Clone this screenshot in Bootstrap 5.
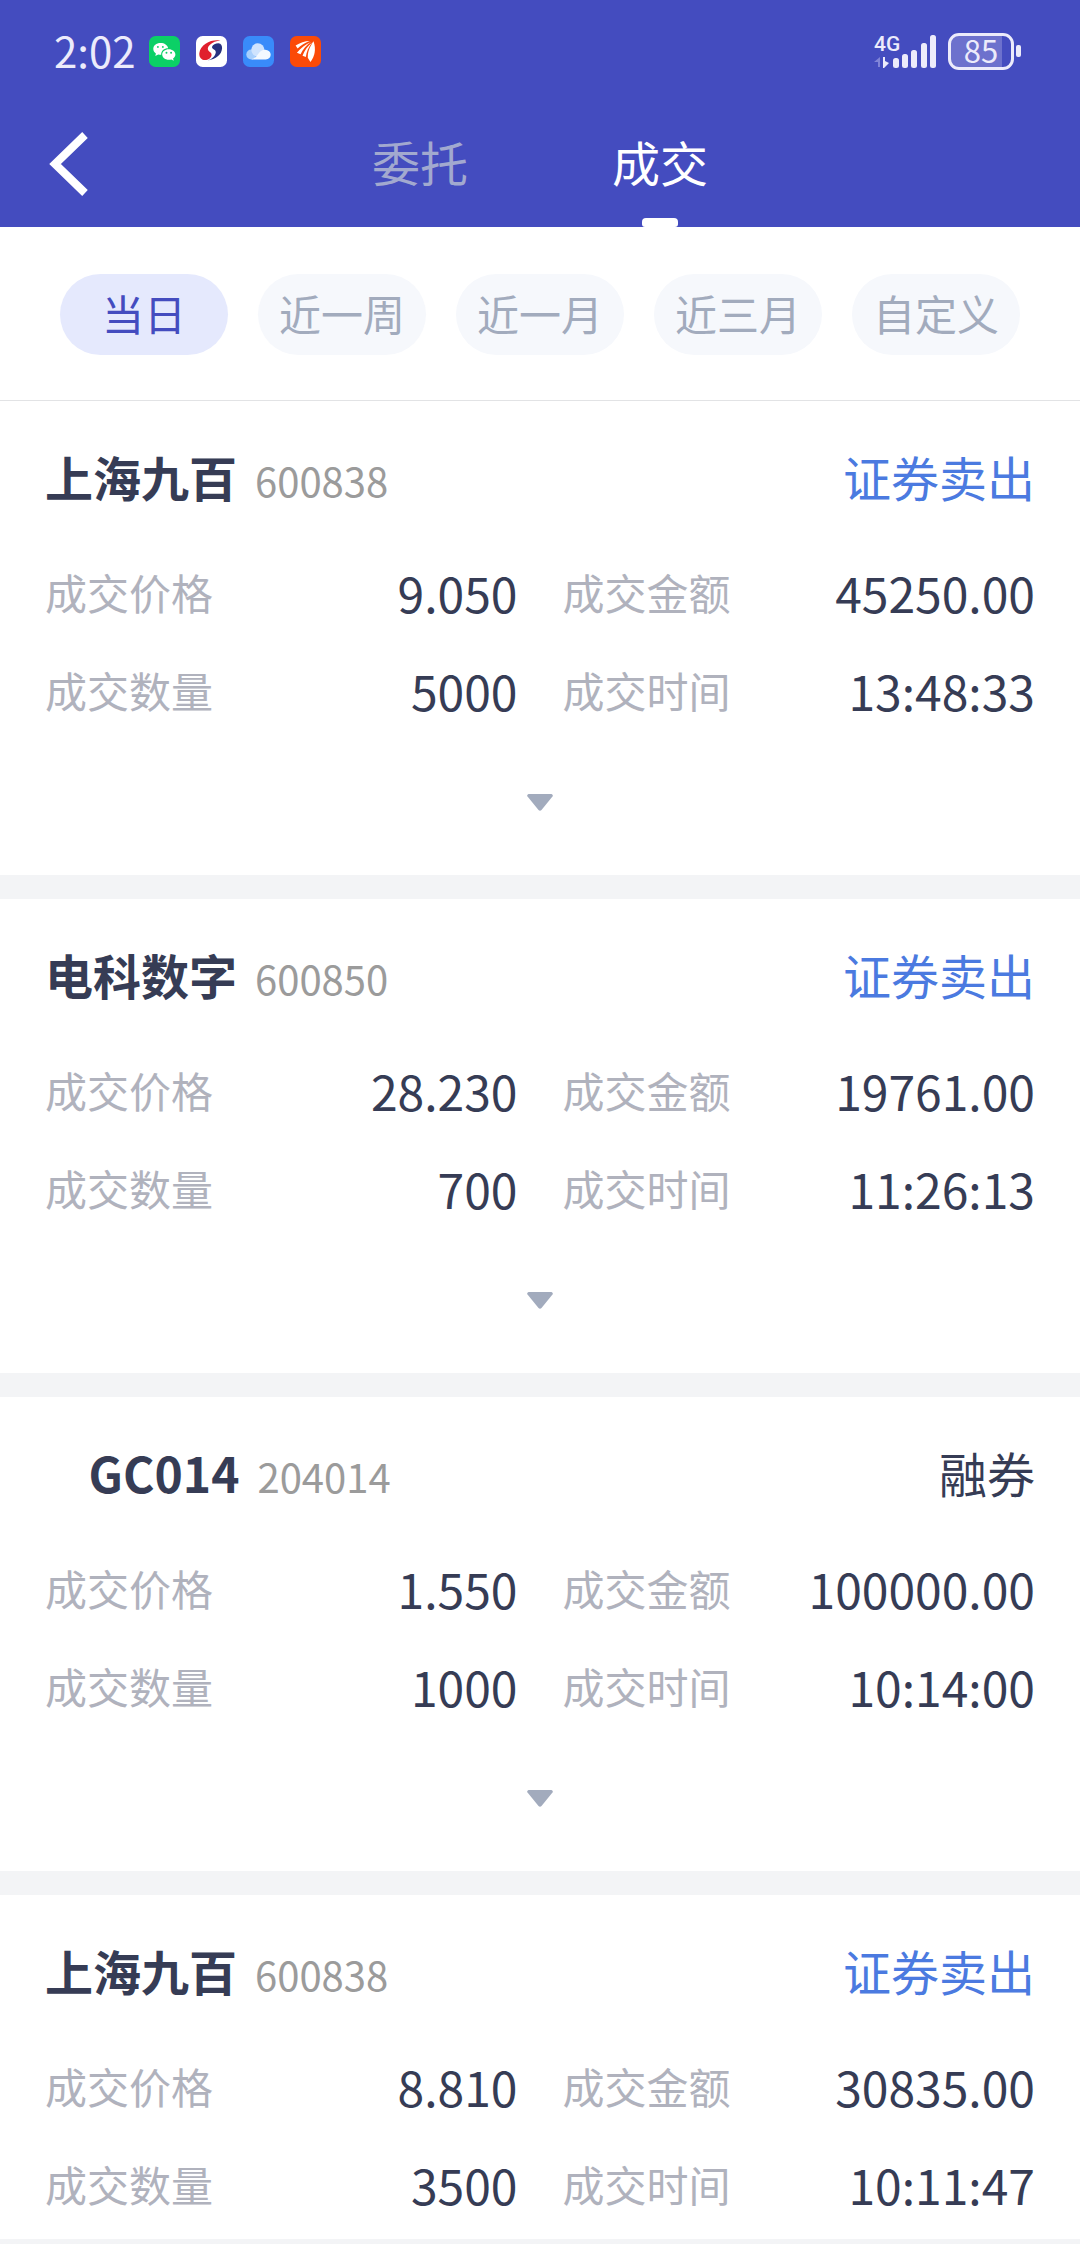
<!DOCTYPE html>
<html lang="zh-CN">
<head>
<meta charset="utf-8">
<meta name="viewport" content="width=device-width, initial-scale=1">
<title>成交</title>
<link href="https://cdn.jsdelivr.net/npm/bootstrap@5.3.0/dist/css/bootstrap.min.css" rel="stylesheet">
<style>
  :root { --brand: #444cbf; --ink: #363c55; --pale: #ecebfb; }
  body { font-family: "Noto Sans CJK SC", "Noto Sans", sans-serif; color: var(--ink); background: #fff; font-size: 48px; line-height: 60px; }
  .app-head { background: var(--brand); }

  .status-bar { height: 102px; padding: 0 59px 0 54px; color: var(--pale); }
  .clock { font-size: 42px; padding-bottom: 3px; }
  .app-icons { gap: 16px; margin-left: 13px; }
  .signal { width: 62px; height: 43px; margin-right: 12px; }
  .net-kind { font: 500 21px/22px Roboto, sans-serif; }
  .battery { width: 66px; height: 37px; padding-bottom: 3px; border: 3px solid var(--pale); border-radius: 11px; font-size: 31px; line-height: 31px; background: linear-gradient(90deg, #6d71cd 85%, transparent 85%); }
  .battery-nub { width: 5px; height: 12px; margin-left: 2px; border-radius: 2px; background: var(--pale); }

  .top-nav { height: 125px; }
  .back-btn { left: 32px; top: 20px; }
  .tab-link { width: 240px; padding-top: 29px; color: #a2a9cf; }
  .tab-link.active { color: #fff; }
  .tab-link.active::after { content: ""; width: 36px; height: 9px; margin-top: auto; border-radius: 4px 4px 3px 3px; background: #fff; }

  .range-bar { padding: 47px 60px 45px; gap: 30px; border-bottom: 1px solid #e2e3e5; }
  .range-btn { flex: 1 1 0; height: 81px; padding: 0 0 4px; border: 0; border-radius: 41px; font-size: 42px; line-height: 60px; color: #a2abbd; background: #f6f8fc; white-space: nowrap; }
  .range-btn.active { color: var(--brand); background: #e5e9fd; }

  .deal-list { min-height: 0; overflow-y: auto; scrollbar-width: none; }
  .deal-list::-webkit-scrollbar { display: none; }
  .deal { padding: 45px 45px 0; border-bottom: 24px solid #f3f4f6; }
  .deal-head { margin-bottom: 56px; }
  .deal-name { font-size: 48px; line-height: 60px; font-weight: 700; white-space: pre; }
  .deal-code { font-size: 40px; line-height: 48px; margin-left: 18px; color: #9b9b9b; }
  .side-sell { color: #4b7ae0; }
  .deal-data { --bs-gutter-x: 45px; --bs-gutter-y: 38px; }
  .deal-data dt { font-size: 42px; font-weight: 400; color: #b0b2bd; }
  .more-btn { height: 155px; padding: 10px 0 0; color: #a2abbd; }
  .home-strip { height: 5px; background: #f3f4f6; }
</style>
</head>
<body class="vh-100 d-flex flex-column overflow-hidden">

<header class="app-head flex-shrink-0">
  <div class="status-bar d-flex align-items-center">
    <span class="clock">2:02</span>
    <div class="app-icons d-flex">
      <svg width="31" height="31" viewBox="0 0 94 94" aria-hidden="true">
        <rect width="94" height="94" rx="20" fill="#0bd066"/>
        <path fill="#fff" d="M35 21C22 21 13 29 13 39c0 6 3 11 8 14l-2 8 9-5c3 1 6 1 9 1-1-12 9-20 21-20C56 27 47 21 35 21z"/>
        <path fill="#fff" d="M60 40c-11 0-20 7-20 16s9 16 20 16c3 0 5 0 8-1l7 4-2-7c4-3 7-7 7-12 0-9-9-16-20-16z"/>
        <g fill="#0bd066"><circle cx="27" cy="33" r="3"/><circle cx="42" cy="33" r="3"/><circle cx="53" cy="51" r="3"/><circle cx="67" cy="51" r="3"/></g>
      </svg>
      <svg width="31" height="31" viewBox="0 0 94 94" aria-hidden="true">
        <rect width="94" height="94" rx="20" fill="#fff"/>
        <path fill="#e01f2d" d="M74 14C48 9 14 24 10 52c-1 16 10 23 24 20 12-3 17-16 10-22-8-5-12-13-3-22C50 19 62 15 74 14z"/>
        <path fill="#27317f" d="M68 22c17 2 13 28-1 39-9 8-20 12-31 13 14-5 23-14 24-25 0-9-14-9-11-17 2-6 10-10 19-10z"/>
      </svg>
      <svg width="31" height="31" viewBox="0 0 94 94" aria-hidden="true">
        <rect width="94" height="94" rx="20" fill="#398bfa"/>
        <circle cx="25" cy="56" r="15" fill="#a8cffd"/>
        <circle cx="45" cy="42" r="20" fill="#cfe3fe"/>
        <path fill="#f3f8ff" d="M25 71c8-2 14-7 20-15 5-8 12-15 22-14 10 1 17 7 17 15s-6 14-15 14z"/>
      </svg>
      <svg width="31" height="31" viewBox="0 0 94 94" aria-hidden="true">
        <rect width="94" height="94" rx="20" fill="#fb4a08"/>
        <g fill="#fff"><path d="M60 15C45 15 30 20 17 29l6 9c10-10 22-17 37-23z"/><path d="M64 18C47 25 32 36 21 51l11 4c7-15 17-27 32-37z"/><path d="M67 20C53 32 44 44 38 60l10 4c2-16 8-30 19-44z"/><path d="M71 16C59 35 53 50 54 66l8 13c13-17 18-40 9-63z"/></g>
      </svg>
    </div>

    <svg class="signal ms-auto" viewBox="0 -3 62 43" role="img" aria-label="4G">
      <text class="net-kind" x="0" y="18" fill="#ecebfb">4G</text>
      <path d="M0 29l6-5v10H4v-5z" fill="#8084d8"/>
      <path d="M9 24l2 0v4l4 2-5 5H9z" fill="#ecebfb"/>
      <g fill="#ecebfb"><rect x="19" y="25" width="6" height="10" rx="2.500"/><rect x="28" y="21" width="6" height="14" rx="2.500"/><rect x="37" y="17" width="6" height="18" rx="2.500"/><rect x="47" y="10" width="6" height="25" rx="2.500"/><rect x="56" y="2" width="6" height="33" rx="2.500"/></g>
    </svg>
    <div class="battery d-flex align-items-center justify-content-center">85</div>
    <div class="battery-nub"></div>
  </div>

  <nav class="top-nav position-relative d-flex justify-content-center">
    <button type="button" class="back-btn btn border-0 position-absolute p-0" aria-label="返回">
      <svg class="d-block" width="76" height="84" viewBox="0 0 76 84"><path d="M53 13L23 42l30 29" fill="none" stroke="#fff" stroke-width="8"/></svg>
    </button>
    <a href="#" class="tab-link d-flex flex-column align-items-center text-decoration-none">委托</a>
    <a href="#" class="tab-link active d-flex flex-column align-items-center text-decoration-none" aria-current="page">成交</a>
  </nav>
</header>

<div class="range-bar d-flex flex-shrink-0">
  <button type="button" class="range-btn btn active">当日</button>
  <button type="button" class="range-btn btn">近一周</button>
  <button type="button" class="range-btn btn">近一月</button>
  <button type="button" class="range-btn btn">近三月</button>
  <button type="button" class="range-btn btn">自定义</button>
</div>

<main class="deal-list flex-grow-1">
  <article class="deal">
    <div class="deal-head d-flex align-items-baseline">
      <h2 class="deal-name mb-0">上海九百</h2><span class="deal-code">600838</span>
      <span class="side-sell ms-auto">证券卖出</span>
    </div>
    <dl class="deal-data row mb-0">
      <div class="col-6 d-flex justify-content-between align-items-center"><dt>成交价格</dt><dd class="mb-0">9.050</dd></div>
      <div class="col-6 d-flex justify-content-between align-items-center"><dt>成交金额</dt><dd class="mb-0">45250.00</dd></div>
      <div class="col-6 d-flex justify-content-between align-items-center"><dt>成交数量</dt><dd class="mb-0">5000</dd></div>
      <div class="col-6 d-flex justify-content-between align-items-center"><dt>成交时间</dt><dd class="mb-0">13:48:33</dd></div>
    </dl>
    <button type="button" class="more-btn btn border-0 w-100" aria-label="展开"><svg class="d-block mx-auto" width="26" height="17" viewBox="0 0 26 17"><path d="M1.500 0h23q2 1 1 2.500L14.500 16q-1.500 1.500-3 0L.5 2.500Q-.5 1 1.500 0z" fill="currentColor"/></svg></button>
  </article>

  <article class="deal">
    <div class="deal-head d-flex align-items-baseline">
      <h2 class="deal-name mb-0">电科数字</h2><span class="deal-code">600850</span>
      <span class="side-sell ms-auto">证券卖出</span>
    </div>
    <dl class="deal-data row mb-0">
      <div class="col-6 d-flex justify-content-between align-items-center"><dt>成交价格</dt><dd class="mb-0">28.230</dd></div>
      <div class="col-6 d-flex justify-content-between align-items-center"><dt>成交金额</dt><dd class="mb-0">19761.00</dd></div>
      <div class="col-6 d-flex justify-content-between align-items-center"><dt>成交数量</dt><dd class="mb-0">700</dd></div>
      <div class="col-6 d-flex justify-content-between align-items-center"><dt>成交时间</dt><dd class="mb-0">11:26:13</dd></div>
    </dl>
    <button type="button" class="more-btn btn border-0 w-100" aria-label="展开"><svg class="d-block mx-auto" width="26" height="17" viewBox="0 0 26 17"><path d="M1.500 0h23q2 1 1 2.500L14.500 16q-1.500 1.500-3 0L.5 2.500Q-.5 1 1.500 0z" fill="currentColor"/></svg></button>
  </article>

  <article class="deal">
    <div class="deal-head d-flex align-items-baseline">
      <h2 class="deal-name mb-0">    GC014</h2><span class="deal-code">204014</span>
      <span class="ms-auto">融券</span>
    </div>
    <dl class="deal-data row mb-0">
      <div class="col-6 d-flex justify-content-between align-items-center"><dt>成交价格</dt><dd class="mb-0">1.550</dd></div>
      <div class="col-6 d-flex justify-content-between align-items-center"><dt>成交金额</dt><dd class="mb-0">100000.00</dd></div>
      <div class="col-6 d-flex justify-content-between align-items-center"><dt>成交数量</dt><dd class="mb-0">1000</dd></div>
      <div class="col-6 d-flex justify-content-between align-items-center"><dt>成交时间</dt><dd class="mb-0">10:14:00</dd></div>
    </dl>
    <button type="button" class="more-btn btn border-0 w-100" aria-label="展开"><svg class="d-block mx-auto" width="26" height="17" viewBox="0 0 26 17"><path d="M1.500 0h23q2 1 1 2.500L14.500 16q-1.500 1.500-3 0L.5 2.500Q-.5 1 1.500 0z" fill="currentColor"/></svg></button>
  </article>

  <article class="deal">
    <div class="deal-head d-flex align-items-baseline">
      <h2 class="deal-name mb-0">上海九百</h2><span class="deal-code">600838</span>
      <span class="side-sell ms-auto">证券卖出</span>
    </div>
    <dl class="deal-data row mb-0">
      <div class="col-6 d-flex justify-content-between align-items-center"><dt>成交价格</dt><dd class="mb-0">8.810</dd></div>
      <div class="col-6 d-flex justify-content-between align-items-center"><dt>成交金额</dt><dd class="mb-0">30835.00</dd></div>
      <div class="col-6 d-flex justify-content-between align-items-center"><dt>成交数量</dt><dd class="mb-0">3500</dd></div>
      <div class="col-6 d-flex justify-content-between align-items-center"><dt>成交时间</dt><dd class="mb-0">10:11:47</dd></div>
    </dl>
    <button type="button" class="more-btn btn border-0 w-100" aria-label="展开"><svg class="d-block mx-auto" width="26" height="17" viewBox="0 0 26 17"><path d="M1.500 0h23q2 1 1 2.500L14.500 16q-1.500 1.500-3 0L.5 2.500Q-.5 1 1.500 0z" fill="currentColor"/></svg></button>
  </article>
</main>
<footer class="home-strip flex-shrink-0"></footer>

<script src="https://cdn.jsdelivr.net/npm/bootstrap@5.3.0/dist/js/bootstrap.bundle.min.js"></script>
</body>
</html>
